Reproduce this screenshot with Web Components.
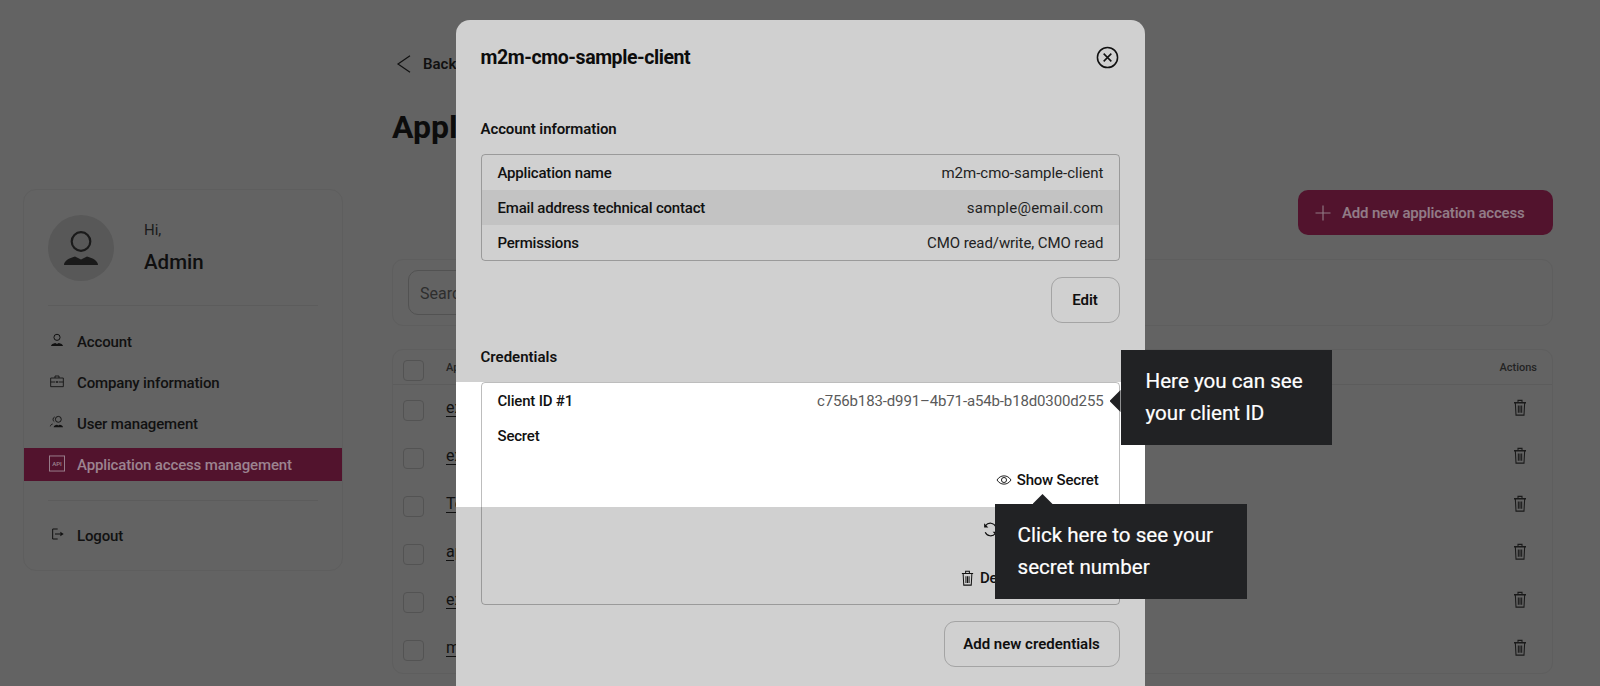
<!DOCTYPE html>
<html>
<head>
<meta charset="utf-8">
<style>
  html, body { margin: 0; height: 686px; overflow: hidden; background: #636363; }
  body { font-family: Roboto, "Liberation Sans", sans-serif; color: #0f0f0f; }
</style>
</head>
<body>
<admin-page>
  <app-sidebar slot="side"></app-sidebar>
  <access-list slot="main"></access-list>
</admin-page>
<detail-modal>
  <span slot="title">m2m-cmo-sample-client</span>
</detail-modal>

<script>
const ICONS = {
  person: '<circle cx="12" cy="8" r="4.6" fill="none" stroke="currentColor" stroke-width="1.5"/><path d="M3 21c0-2.6 3.4-4 6.4-4.6L12 18l2.6-1.6c3 .6 6.4 2 6.4 4.6z" fill="currentColor"/>',
  case: '<path d="M2.5 7.5h19v13h-19zM2.5 13.5h7M14.5 13.5h7M9 7.5V4.5h6v3" fill="none" stroke="currentColor" stroke-width="1.3"/><circle cx="12" cy="13.5" r="1.4" fill="currentColor"/>',
  users: '<circle cx="14" cy="8" r="4.4" fill="none" stroke="currentColor" stroke-width="1.4"/><path d="M7 20c0-2.4 2.8-3.6 5-4l2 1.2 2-1.2c2.2.4 5 1.6 5 4z" fill="currentColor"/><path d="M8.6 4.4A4 4 0 0 0 8 11.6M2 18.5c.3-2 1.7-3 3.5-3.5" fill="none" stroke="currentColor" stroke-width="1.3"/>',
  logout: '<path d="M13 4.5H5.500v15H13" fill="none" stroke="currentColor" stroke-width="1.5" stroke-linejoin="round"/><path d="M9 12h8" stroke="currentColor" stroke-width="1.5"/><path d="M17 8.500l5 3.500-5 3.500z" fill="currentColor"/>',
  trash: '<path d="M3 6h18M9 5.500V3h6v2.500M5 6l1 15.500h12L19 6M9.500 9.500v9M12 9.500v9M14.500 9.500v9" fill="none" stroke="currentColor" stroke-width="1.6"/>',
  plus: '<path d="M12 2v20M2 12h20" stroke="currentColor" stroke-width="1.5"/>',
  back: '<path d="M20 1L4 12l16 11" fill="none" stroke="currentColor" stroke-width="1.6"/>',
  close: '<circle cx="12" cy="12" r="10.500" fill="none" stroke="currentColor" stroke-width="1.6"/><path d="M8 8l8 8M16 8l-8 8" stroke="currentColor" stroke-width="1.6"/>',
  eye: '<path d="M1.500 12C4.200 7.800 7.800 5.800 12 5.800s7.800 2 10.500 6.200c-2.700 4.200-6.300 6.200-10.500 6.200S4.200 16.200 1.500 12z" fill="none" stroke="currentColor" stroke-width="1.4"/><circle cx="12" cy="12" r="3.800" fill="none" stroke="currentColor" stroke-width="1.4"/>',
  refresh: '<path d="M19.500 8A8.500 8.500 0 0 0 5 6.500M4.500 16A8.500 8.500 0 0 0 19 17.500" fill="none" stroke="currentColor" stroke-width="1.6"/><path d="M3 3v6h6zM21 21v-6h-6z" fill="currentColor"/>'
};

class UiIcon extends HTMLElement {
  connectedCallback() {
    const size = this.getAttribute('size') || 16;
    const h = this.getAttribute('h') || size;
    this.attachShadow({ mode: 'open' });
    this.shadowRoot.innerHTML = `
      <style>:host { display: inline-flex; flex: none; } svg { display: block; }</style>
      <svg width="${size}" height="${h}" viewBox="0 0 24 24" preserveAspectRatio="none">${ICONS[this.getAttribute('name')] || ''}</svg>
    `;
  }
}

class AdminPage extends HTMLElement {
  constructor() {
    super();
    this.attachShadow({ mode: 'open' });
    this.shadowRoot.innerHTML = `
      <style>
        :host { display: flex; align-items: flex-start; gap: 49px; padding: 0 47px 0 23px; height: 686px; overflow: hidden; }
        .side { display: block; padding-top: 189px; flex: none; }
        .main { display: block; flex: 1; min-width: 0; }
      </style>
      <div class="side"><slot name="side"></slot></div>
      <div class="main"><slot name="main"></slot></div>
    `;
  }
}

class NavItem extends HTMLElement {
  constructor() {
    super();
    this.attachShadow({ mode: 'open' });
    this.shadowRoot.innerHTML = `
      <style>
        :host { display: flex; align-items: center; gap: 12px; height: 33px; padding-left: 25px; font-size: 15px; font-weight: 500; letter-spacing: -.15px; color: #111; }
        :host([active]) { background: #52132d; color: #9c8390; }
        .ic { width: 16px; height: 16px; display: flex; margin-top: -4px; }
      </style>
      <div class="ic"><slot name="icon"></slot></div>
      <slot></slot>
    `;
  }
}

class AppSidebar extends HTMLElement {
  constructor() {
    super();
    this.attachShadow({ mode: 'open' });
    this.shadowRoot.innerHTML = `
      <style>
        :host { display: block; width: 320px; height: 382px; box-sizing: border-box; border: 1px solid #5e5e5e; border-radius: 13px; }
        .who { display: flex; gap: 30px; padding: 25px 24px 0; height: 115px; box-sizing: border-box; }
        .avatar { width: 66px; height: 66px; border-radius: 50%; background: #585858; display: flex; align-items: center; justify-content: center; color: #1a1a1a; }
        .hi { font-size: 15px; line-height: 20px; margin-top: 5px; color: #1b1b1b; }
        .name { font-size: 20.5px; line-height: 28px; margin-top: 8px; font-weight: 500; color: #0f0f0f; }
        hr { border: 0; height: 1px; background: #5c5c5c; margin: 0 24px; }
        nav { display: flex; flex-direction: column; gap: 8px; padding-top: 19px; }
        .logout { margin-top: 18px; }
        .bottom { margin-top: 19px; }
      </style>
      <div class="who">
        <div class="avatar"><svg width="36" height="36" viewBox="0 0 36 36"><circle cx="18" cy="11.5" r="9.3" fill="none" stroke="currentColor" stroke-width="2.2"/><path d="M1 35c0-4 5-7 11-8.500l6 3 6-3c6 1.500 11 4.500 11 8.500z" fill="currentColor"/></svg></div>
        <div>
          <div class="hi">Hi,</div>
          <div class="name">Admin</div>
        </div>
      </div>
      <hr>
      <nav>
        <nav-item><ui-icon slot="icon" name="person"></ui-icon>Account</nav-item>
        <nav-item><ui-icon slot="icon" name="case"></ui-icon>Company information</nav-item>
        <nav-item><ui-icon slot="icon" name="users"></ui-icon>User management</nav-item>
        <nav-item active><svg slot="icon" width="17" height="17" viewBox="0 0 17 17"><rect x=".5" y=".5" width="16" height="16" fill="none" stroke="currentColor"/><text x="8.5" y="11" text-anchor="middle" font-size="6.5" font-family="Roboto" fill="currentColor">API</text></svg>Application access management</nav-item>
      </nav>
      <div class="bottom"><hr></div>
      <div class="logout"><nav-item><ui-icon slot="icon" name="logout"></ui-icon>Logout</nav-item></div>
    `;
  }
}

class OutlineButton extends HTMLElement {
  constructor() {
    super();
    this.attachShadow({ mode: 'open' });
    this.shadowRoot.innerHTML = `
      <style>
        :host { display: inline-flex; align-items: center; justify-content: center; box-sizing: border-box; height: 46px; padding: 0 20px; border: 1px solid #a4a4a4; border-radius: 11px; font-size: 15px; font-weight: 600; color: #0f0f0f; }
      </style>
      <slot></slot>
    `;
  }
}

class AccessRow extends HTMLElement {
  constructor() {
    super();
    this.attachShadow({ mode: 'open' });
    this.shadowRoot.innerHTML = `
      <style>
        :host { display: flex; align-items: center; height: 48px; padding: 0 15px 0 10px; }
        .box { width: 19px; height: 19px; border: 1px solid #535353; border-radius: 4px; margin-top: 3px; flex: none; }
        .name { flex: 1; margin: -4px 0 0 22px; font-size: 16px; color: #111; text-decoration: underline; text-underline-offset: 3px; }
        ui-icon { color: #1a1a1a; margin-right: 9px; margin-top: -3px; }
      </style>
      <div class="box"></div>
      <div class="name"><slot></slot></div>
      <ui-icon name="trash" size="16" h="19"></ui-icon>
    `;
  }
}

class AccessList extends HTMLElement {
  constructor() {
    super();
    this.attachShadow({ mode: 'open' });
    this.shadowRoot.innerHTML = `
      <style>
        :host { display: block; padding-top: 52px; }
        .back { display: flex; align-items: center; gap: 10px; height: 24px; padding-left: 3px; font-size: 15px; font-weight: 600; color: #111; }
        h1 { margin: 31px 0 0; font-size: 32px; line-height: 40px; font-weight: 700; color: #0c0c0c; }
        .actions { display: flex; justify-content: flex-end; margin-top: 43px; }
        .add { display: flex; align-items: center; gap: 10px; box-sizing: border-box; width: 255px; height: 45px; padding-left: 16px; background: #52132d; border-radius: 10px; color: #917b86; font-size: 15px; font-weight: 600; letter-spacing: -.18px; }
        .card { border: 1px solid #5e5e5e; border-radius: 11px; box-sizing: border-box; }
        .search { margin-top: 24px; height: 67px; padding: 10px 15px; }
        .input { width: 260px; height: 45px; box-sizing: border-box; border: 1px solid #525252; border-radius: 10px; padding: 1px 11px 0; display: flex; align-items: center; font-size: 16px; color: #2e2e2e; }
        .table { margin-top: 23px; height: 325px; }
        .head { display: flex; align-items: center; height: 34px; padding: 0 15px 0 10px; border-bottom: 1px solid #5c5c5c; font-size: 11px; font-weight: 500; color: #232323; }
        .head .box { width: 19px; height: 19px; border: 1px solid #535353; border-radius: 4px; margin-top: 7px; }
        .head .label { flex: 1; margin-left: 22px; }
      </style>
      <div class="back"><ui-icon name="back" size="18"></ui-icon>Back to overview</div>
      <h1>Application access management</h1>
      <div class="actions">
        <div class="add"><ui-icon name="plus" size="18"></ui-icon>Add new application access</div>
      </div>
      <div class="card search"><div class="input">Search</div></div>
      <div class="card table">
        <div class="head"><div class="box"></div><div class="label">Application name</div><div>Actions</div></div>
        <access-row>example-client-one</access-row>
        <access-row>example-client-two</access-row>
        <access-row>Test client</access-row>
        <access-row>api-client</access-row>
        <access-row>example-client-three</access-row>
        <access-row>m2m-sample</access-row>
      </div>
    `;
  }
}

class InfoRow extends HTMLElement {
  constructor() {
    super();
    this.attachShadow({ mode: 'open' });
    this.shadowRoot.innerHTML = `
      <style>
        :host { display: flex; justify-content: space-between; align-items: center; height: 35px; padding: 0 15px 0 16px; font-size: 15px; }
        :host([striped]) { background: #c3c3c3; }
        .k { font-weight: 500; letter-spacing: -.2px; color: #111; }
        .v { color: var(--value-color, #222); letter-spacing: var(--value-spacing, 0); }
      </style>
      <div class="k"><slot name="k"></slot></div>
      <div class="v"><slot></slot></div>
    `;
  }
}

class TourTip extends HTMLElement {
  constructor() {
    super();
    this.attachShadow({ mode: 'open' });
    this.shadowRoot.innerHTML = `
      <style>
        :host { position: absolute; display: block; box-sizing: border-box; height: 95px; padding: 16px 0 0 23px; background: #212224; color: #fff; font-size: 20.6px; line-height: 31.5px; font-weight: 400; -webkit-text-stroke: .2px #fff; white-space: nowrap; z-index: 3; }
        :host([side="left"]) { padding-left: 25px; }
        .arrow { position: absolute; background: #212224; }
        :host([side="left"]) .arrow { left: -11px; top: 40px; width: 11px; height: 22px; clip-path: polygon(100% 0, 0 50%, 100% 100%); }
        :host([side="top"]) .arrow { left: 38px; top: -10px; width: 20px; height: 10px; clip-path: polygon(50% 0, 100% 100%, 0 100%); }
      </style>
      <div class="arrow"></div>
      <slot></slot>
    `;
  }
}

class DetailModal extends HTMLElement {
  constructor() {
    super();
    this.attachShadow({ mode: 'open' });
    this.shadowRoot.innerHTML = `
      <style>
        :host { position: fixed; inset: 0; display: flex; justify-content: center; padding-top: 20px; overflow: hidden; }
        .modal { width: 689px; height: 760px; box-sizing: border-box; padding: 0 25px; background: #d0d0d0; border-radius: 14px 14px 0 0; }
        header { display: flex; justify-content: space-between; align-items: center; height: 74px; font-size: 19.5px; letter-spacing: -.42px; font-weight: 700; color: #0c0c0c; }
        header ui-icon { margin-right: 1px; color: #111; }
        h2 { margin: 0; font-size: 15px; line-height: 20px; font-weight: 600; color: #111; }
        .account { margin-top: 25px; letter-spacing: -.1px; }
        .box { border: 1px solid rgba(0,0,0,.26); border-radius: 4px; box-sizing: border-box; }
        .info { margin-top: 15px; height: 107px; overflow: hidden; }
        .right { display: flex; justify-content: flex-end; }
        .edit { margin-top: 16px; }
        .cred-title { margin-top: 24px; }
        .cred { position: relative; margin-top: 15px; height: 223px; }
        .band { position: absolute; left: -25px; right: -25px; top: 0; height: 125px; background: #fff; }
        .creds { position: relative; height: 223px; --value-color: #5a5a5a; --value-spacing: -.13px; }
        .tool { display: flex; justify-content: flex-end; align-items: center; gap: 5px; padding-right: 20px; font-size: 15px; font-weight: 500; letter-spacing: -.2px; color: #111; }
        .show { margin-top: 9px; height: 36px; }
        .reg { margin-top: 13px; height: 36px; padding-right: 25px; }
        .del { margin-top: 13px; height: 36px; padding-right: 97px; }
        .add { margin-top: 16px; }
        .add outline-button { height: 46px; width: 176px; padding: 0; }
        .t1 { left: 640px; top: -32px; width: 211px; }
        .t2 { left: 514px; top: 122px; width: 252px; }
      </style>
      <div class="modal">
        <header><slot name="title"></slot><ui-icon name="close" size="23"></ui-icon></header>
        <h2 class="account">Account information</h2>
        <div class="box info">
          <info-row><span slot="k">Application name</span>m2m-cmo-sample-client</info-row>
          <info-row striped><span slot="k">Email address technical contact</span><span style="letter-spacing:.25px">sample@email.com</span></info-row>
          <info-row><span slot="k">Permissions</span><span style="letter-spacing:-.09px">CMO read/write, CMO read</span></info-row>
        </div>
        <div class="right edit"><outline-button style="width:69px;padding:0">Edit</outline-button></div>
        <h2 class="cred-title">Credentials</h2>
        <div class="cred">
          <div class="band"></div>
          <div class="box creds">
            <info-row><span slot="k">Client ID #1</span>c756b183-d991–4b71-a54b-b18d0300d255</info-row>
            <info-row><span slot="k">Secret</span></info-row>
            <div class="tool show"><ui-icon name="eye" size="16"></ui-icon>Show Secret</div>
            <div class="tool reg"><ui-icon name="refresh" size="17"></ui-icon>Renew Secret</div>
            <div class="tool del"><ui-icon name="trash" size="15" h="18"></ui-icon>Delete</div>
          </div>
          <tour-tip class="t1" side="left">Here you can see<br>your client ID</tour-tip>
          <tour-tip class="t2" side="top">Click here to see your<br>secret number</tour-tip>
        </div>
        <div class="right add"><outline-button>Add new credentials</outline-button></div>
      </div>
    `;
  }
}

customElements.define('ui-icon', UiIcon);
customElements.define('admin-page', AdminPage);
customElements.define('nav-item', NavItem);
customElements.define('app-sidebar', AppSidebar);
customElements.define('outline-button', OutlineButton);
customElements.define('access-row', AccessRow);
customElements.define('access-list', AccessList);
customElements.define('info-row', InfoRow);
customElements.define('tour-tip', TourTip);
customElements.define('detail-modal', DetailModal);
</script>
</body>
</html>
